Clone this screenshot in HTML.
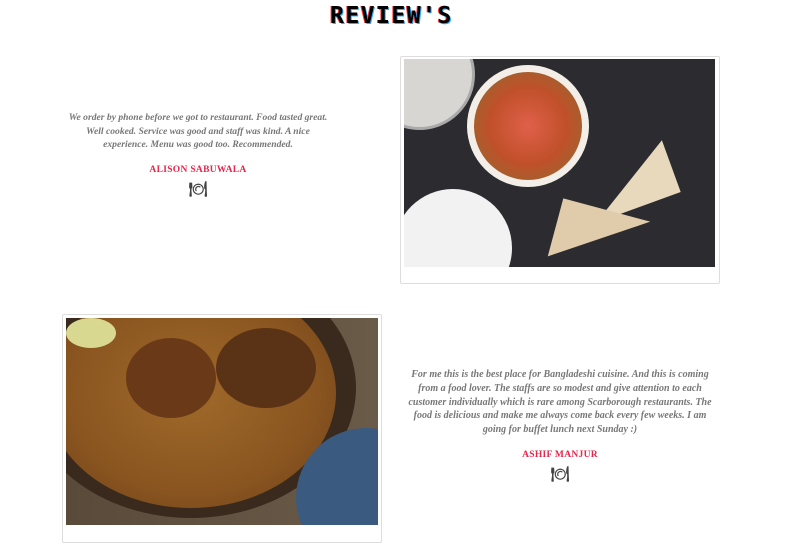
<!DOCTYPE html>
<html><head><meta charset="utf-8"><style>
body{margin:0;width:803px;height:552px;background:#fff;position:relative;overflow:hidden;font-family:"Liberation Serif",serif}
h1{position:absolute;top:3px;left:0;width:783px;text-align:center;margin:0;font:900 23px "DejaVu Sans Mono","Liberation Mono",monospace;letter-spacing:1.5px;color:#000;text-shadow:1px 1px 0 #3af,-1px 0 0 #f33}
.t{position:absolute;text-align:center;color:#777;font:italic bold 9.6px/13.5px "Liberation Serif",serif}
.n{color:#e8254a;font:bold 9.5px "Liberation Serif",serif;font-style:normal;margin-top:13px;letter-spacing:.3px}
.ic{margin-top:9px;font-size:15px;color:#444;font-style:normal}
.f{position:absolute;border:1px solid #ddd;border-radius:2px;background:#fff}
.img{position:absolute;overflow:hidden}
</style></head><body>
<h1>REVIEW'S</h1>
<div class="t" style="left:66px;top:111px;width:264px">We order by phone before we got to restaurant. Food tasted great. Well cooked. Service was good and staff was kind. A nice experience. Menu was good too. Recommended.
<div class="n">ALISON SABUWALA</div><div class="ic">🍽</div></div>
<div class="f" style="left:400px;top:56px;width:318px;height:226px"></div>
<div class="img" style="left:404px;top:59px;width:311px;height:208px;background:#2c2c30">
<div style="position:absolute;left:-40px;top:-40px;width:105px;height:105px;border-radius:50%;background:#d8d6d2;border:3px solid #aaa"></div>
<div style="position:absolute;left:63px;top:6px;width:122px;height:122px;border-radius:50%;background:#f3efe8"></div>
<div style="position:absolute;left:70px;top:13px;width:108px;height:108px;border-radius:50%;background:radial-gradient(#e0604a,#c0502a 50%,#8a7030)"></div>
<div style="position:absolute;left:-10px;top:130px;width:118px;height:118px;border-radius:50%;background:#f2f2f2"></div>
<div style="position:absolute;left:180px;top:95px;width:0;height:0;border-left:90px solid transparent;border-bottom:55px solid #e8d8bc;transform:rotate(-20deg)"></div>
<div style="position:absolute;left:150px;top:150px;width:0;height:0;border-right:90px solid transparent;border-top:60px solid #e0ccaa;transform:rotate(15deg)"></div>
</div>
<div class="f" style="left:62px;top:314px;width:318px;height:227px"></div>
<div class="img" style="left:66px;top:318px;width:312px;height:207px;background:linear-gradient(90deg,#5a4a3a,#6a5a48)">
<div style="position:absolute;left:-40px;top:-60px;width:330px;height:260px;border-radius:50%;background:#3a2a1e"></div>
<div style="position:absolute;left:-20px;top:-40px;width:290px;height:230px;border-radius:50%;background:radial-gradient(#a06a2a,#8a5520 60%,#6a4018)"></div>
<div style="position:absolute;left:60px;top:20px;width:90px;height:80px;border-radius:50%;background:#6a3a18"></div>
<div style="position:absolute;left:150px;top:10px;width:100px;height:80px;border-radius:50%;background:#5a3216"></div>
<div style="position:absolute;left:230px;top:110px;width:140px;height:140px;border-radius:50%;background:#3a5a80"></div>
<div style="position:absolute;left:0;top:0;width:50px;height:30px;border-radius:50%;background:#d8d890"></div>
</div>
<div class="t" style="left:403px;top:368px;width:314px;font-size:10px;line-height:13.8px">For me this is the best place for Bangladeshi cuisine. And this is coming from a food lover. The staffs are so modest and give attention to each customer individually which is rare among Scarborough restaurants. The food is delicious and make me always come back every few weeks. I am going for buffet lunch next Sunday :)
<div class="n">ASHIF MANJUR</div><div class="ic">🍽</div></div>
</body></html>
